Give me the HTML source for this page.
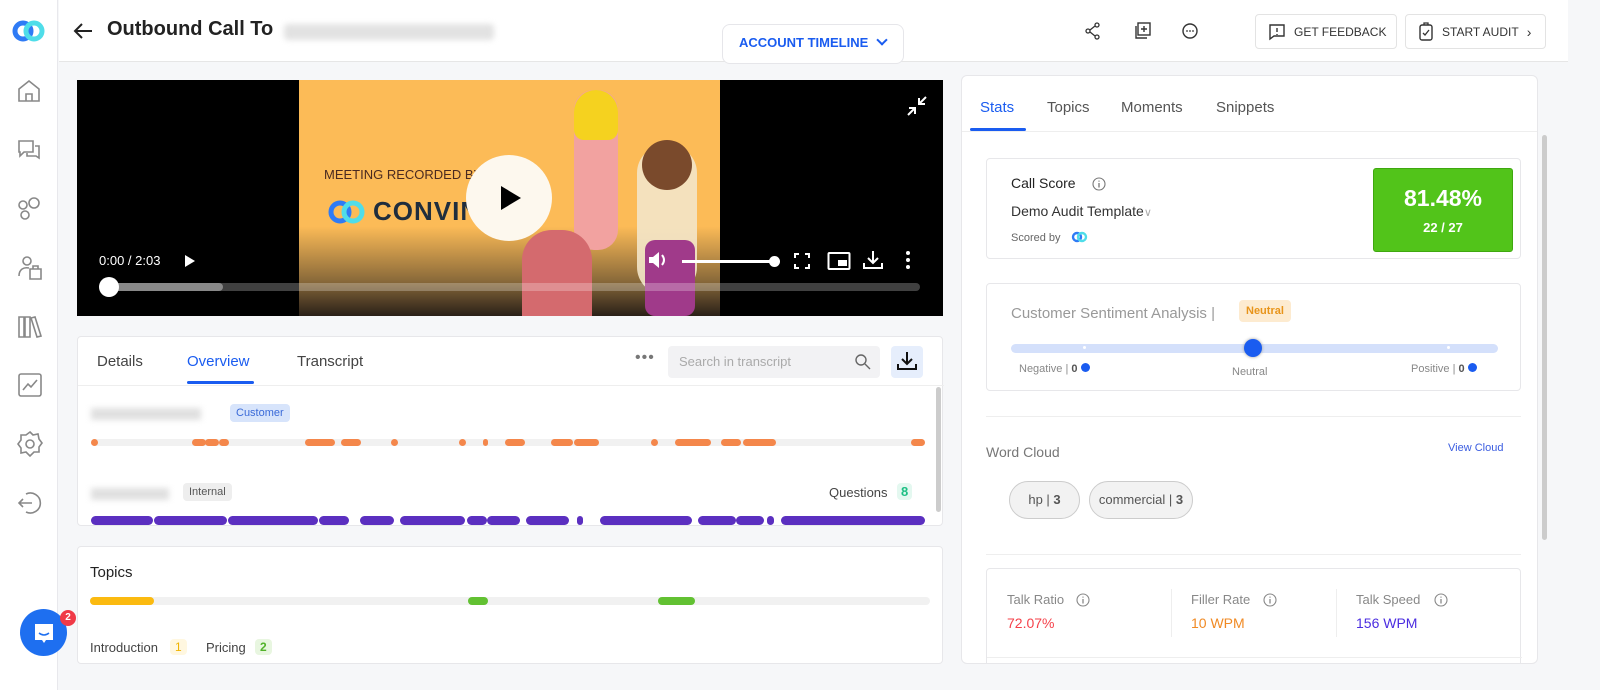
<!DOCTYPE html>
<html><head><meta charset="utf-8"><style>
*{box-sizing:border-box;margin:0;padding:0}
body{width:1600px;height:690px;overflow:hidden;background:#f6f7f9;font-family:"Liberation Sans",sans-serif;position:relative;color:#333}
.abs{position:absolute}
.side{left:0;top:0;width:58px;height:690px;background:#fff;border-right:1px solid #e8e8ec}
.hdr{left:59px;top:0;width:1509px;height:62px;background:#fff;border-bottom:1px solid #e6e6e6}
.btn{border:1px solid #e3e3e3;border-radius:4px;background:#fff;font-size:12px;color:#333;display:flex;align-items:center;gap:8px;padding-left:12px}
.card{background:#fff;border:1px solid #e7e7ea;border-radius:4px}
.pill{border-radius:4px;font-size:11px;padding:3px 6px}
.ic{stroke:#888;fill:none;stroke-width:1.6}
</style></head><body>
<div class="abs side">
 <svg class="abs" style="left:12px;top:20px" width="34" height="22"><circle cx="11" cy="11" r="8" stroke="#2f7bf5" stroke-width="5" fill="none"/><circle cx="22" cy="11" r="8" stroke="#4fdde9" stroke-width="5" fill="none"/></svg>
 <svg class="abs" style="left:16px;top:78px" width="26" height="26"><path class="ic" d="M3 11 L13 3 L23 11 V23 H3Z M10 23 V16 H16 V23"/></svg>
 <svg class="abs" style="left:16px;top:137px" width="26" height="26"><path class="ic" d="M3 4 H17 V15 H8 L4 19 V15 H3Z M19 9 H23 V21 L20 19 H11 V16"/></svg>
 <svg class="abs" style="left:15px;top:195px" width="28" height="28"><circle class="ic" cx="8" cy="10" r="4"/><circle class="ic" cx="19" cy="8" r="5"/><circle class="ic" cx="10" cy="20" r="4"/></svg>
 <svg class="abs" style="left:16px;top:254px" width="28" height="28"><circle class="ic" cx="11" cy="7" r="4"/><path class="ic" d="M3 22 C3 15 8 13 13 14 M14 15 H25 V25 H14Z M17 15 V12 H22 V15"/></svg>
 <svg class="abs" style="left:16px;top:313px" width="28" height="28"><path class="ic" d="M3 4 H8 V24 H3Z M9 4 H14 V24 H9Z M15 5 L19 4 L25 23 L21 24Z"/></svg>
 <svg class="abs" style="left:17px;top:372px" width="26" height="26"><rect class="ic" x="2" y="2" width="22" height="22" rx="2"/><path class="ic" d="M6 18 L11 12 L14 15 L20 8"/></svg>
 <svg class="abs" style="left:16px;top:430px" width="28" height="28"><circle class="ic" cx="14" cy="14" r="4"/><path class="ic" d="M14 2 L17 5 L22 4 L23 9 L26 13 L23 17 L23 22 L18 22 L14 26 L10 22 L5 23 L5 18 L2 14 L5 10 L5 5 L10 5Z"/></svg>
 <svg class="abs" style="left:16px;top:489px" width="28" height="28"><path class="ic" d="M10 5 A10 10 0 1 1 10 23 M16 14 H3 M7 10 L3 14 L7 18"/></svg>
</div>
<div class="abs" style="left:20px;top:609px;width:47px;height:47px;border-radius:50%;background:#1e6ff0"></div>
<svg class="abs" style="left:31px;top:620px" width="26" height="26"><path d="M4 4 H22 V20 H15 L13 23 L11 20 H4Z" fill="#fff"/><path d="M8 13 Q13 17 18 13" stroke="#1e6ff0" stroke-width="1.5" fill="none"/></svg>
<div class="abs" style="left:60px;top:610px;width:16px;height:16px;border-radius:50%;background:#f03a47;color:#fff;font-size:10px;font-weight:bold;text-align:center;line-height:16px">2</div>

<div class="abs hdr">
 <svg class="abs" style="left:13px;top:20px" width="22" height="22"><path d="M20 11 H3 M10 4 L3 11 L10 18" stroke="#222" stroke-width="2" fill="none"/></svg>
 <div class="abs" style="left:48px;top:18px;font-size:20px;font-weight:bold;color:#222">Outbound Call To</div>
 <div class="abs" style="left:225px;top:24px;width:210px;height:16px;background:#e2e2e2;filter:blur(3px);border-radius:4px"></div>
 <div class="abs" style="left:663px;top:24px;width:182px;height:40px;border:1px solid #e6e6ea;border-radius:8px;background:#fff;font-size:13px;font-weight:bold;color:#1a5cf0;padding:10px 0 0 16px">ACCOUNT TIMELINE <span style="display:inline-block;width:8px;height:8px;border-right:2px solid #1a5cf0;border-bottom:2px solid #1a5cf0;transform:rotate(45deg);margin:0 0 3px 6px"></span></div>
 <svg class="abs" style="left:1025px;top:22px" width="18" height="18"><circle cx="4" cy="9" r="2" stroke="#333" fill="none" stroke-width="1.3"/><circle cx="13" cy="3" r="2" stroke="#333" fill="none" stroke-width="1.3"/><circle cx="13" cy="15" r="2" stroke="#333" fill="none" stroke-width="1.3"/><path d="M6 8 L11 4 M6 10 L11 14" stroke="#333" stroke-width="1.3"/></svg>
 <svg class="abs" style="left:1074px;top:21px" width="20" height="20"><rect x="5" y="2" width="12" height="12" stroke="#333" fill="none" stroke-width="1.4"/><path d="M3 5 V17 H14 M11 5 V11 M8 8 H14" stroke="#333" fill="none" stroke-width="1.4"/></svg>
 <svg class="abs" style="left:1121px;top:21px" width="20" height="20"><circle cx="10" cy="10" r="7" stroke="#333" fill="none" stroke-width="1.4"/><circle cx="7" cy="10" r=".9" fill="#333"/><circle cx="10" cy="10" r=".9" fill="#333"/><circle cx="13" cy="10" r=".9" fill="#333"/></svg>
 <div class="abs btn" style="left:1196px;top:14px;width:142px;height:35px"><svg width="18" height="18"><path d="M2 2 H16 V13 H6 L2 16Z M9 5 V9 M9 11 V12" stroke="#333" fill="none" stroke-width="1.4"/></svg>GET FEEDBACK</div>
 <div class="abs btn" style="left:1346px;top:14px;width:141px;height:35px"><svg width="16" height="20"><rect x="2" y="3" width="12" height="15" rx="2" stroke="#333" fill="none" stroke-width="1.4"/><path d="M5 11 L7 13 L11 8 M6 3 V1 H10 V3" stroke="#333" fill="none" stroke-width="1.3"/></svg>START AUDIT <span style="font-size:14px">›</span></div>
</div>

<!-- video -->
<div class="abs" style="left:77px;top:80px;width:866px;height:236px;background:#000;overflow:hidden">
 <div class="abs" style="left:222px;top:0;width:421px;height:236px;background:linear-gradient(#fcbb57 0%,#fcbb57 62%,#8a6a3a 85%,#2a2018 100%)"></div>
 <div class="abs" style="left:247px;top:87px;font-size:13px;color:#4a2a20">MEETING RECORDED BY</div>
 <svg class="abs" style="left:250px;top:118px" width="40" height="28"><circle cx="13" cy="14" r="9" stroke="#2f7bf5" stroke-width="5" fill="none"/><circle cx="26" cy="14" r="9" stroke="#4fdde9" stroke-width="5" fill="none"/></svg>
 <div class="abs" style="left:296px;top:116px;font-size:26px;font-weight:bold;color:#1f2d3d;letter-spacing:1px">CONVIN</div>
 <div class="abs" style="left:497px;top:10px;width:44px;height:160px;background:#f2a2a0;border-radius:20px"></div>
 <div class="abs" style="left:497px;top:10px;width:44px;height:50px;background:#f5d21f;border-radius:22px 22px 10px 10px"></div>
 <div class="abs" style="left:560px;top:65px;width:60px;height:150px;background:#f3e6c9;border-radius:28px;opacity:.9"></div>
 <div class="abs" style="left:565px;top:60px;width:50px;height:50px;background:#7a4a2c;border-radius:50%"></div>
 <div class="abs" style="left:568px;top:160px;width:50px;height:76px;background:#a03a8a;border-radius:10px"></div>
 <div class="abs" style="left:445px;top:150px;width:70px;height:86px;background:#d46a6e;border-radius:30px 30px 0 0"></div>
 <div class="abs" style="left:389px;top:75px;width:86px;height:86px;border-radius:50%;background:#fdf8ee"></div>
 <svg class="abs" style="left:422px;top:105px" width="24" height="26"><path d="M2 1 L22 13 L2 25Z" fill="#000"/></svg>
 <svg class="abs" style="left:828px;top:14px" width="24" height="24"><path d="M3 21 L10 14 M4 14 H10 V20 M21 3 L14 10 M14 4 V10 H20" stroke="#fff" stroke-width="2" fill="none"/></svg>
 <div class="abs" style="left:22px;top:173px;font-size:13px;color:#fff">0:00 / 2:03</div>
 <svg class="abs" style="left:107px;top:174px" width="12" height="14"><path d="M1 1 L11 7 L1 13Z" fill="#fff"/></svg>
 <svg class="abs" style="left:570px;top:170px" width="22" height="20"><path d="M2 7 H6 L12 2 V18 L6 13 H2Z" fill="#fff"/><path d="M15 5 Q19 10 15 15" stroke="#fff" stroke-width="2" fill="none"/></svg>
 <div class="abs" style="left:605px;top:180px;width:92px;height:3px;background:#fff"></div>
 <div class="abs" style="left:692px;top:176px;width:11px;height:11px;border-radius:50%;background:#fff"></div>
 <svg class="abs" style="left:716px;top:172px" width="18" height="18"><path d="M2 6 V2 H6 M12 2 H16 V6 M16 12 V16 H12 M6 16 H2 V12" stroke="#fff" stroke-width="2" fill="none"/></svg>
 <svg class="abs" style="left:750px;top:171px" width="24" height="20"><rect x="1.5" y="2" width="21" height="16" rx="1" stroke="#fff" stroke-width="2" fill="none"/><rect x="11" y="9" width="9" height="6" fill="#fff"/></svg>
 <svg class="abs" style="left:785px;top:169px" width="22" height="22"><path d="M11 2 V14 M6 9 L11 14 L16 9 M2 14 V19 H20 V14" stroke="#fff" stroke-width="2" fill="none"/></svg>
 <svg class="abs" style="left:826px;top:170px" width="10" height="20"><circle cx="5" cy="3" r="2" fill="#fff"/><circle cx="5" cy="10" r="2" fill="#fff"/><circle cx="5" cy="17" r="2" fill="#fff"/></svg>
 <div class="abs" style="left:24px;top:203px;width:819px;height:8px;border-radius:4px;background:rgba(255,255,255,.25)"></div>
 <div class="abs" style="left:24px;top:203px;width:122px;height:8px;border-radius:4px;background:#888"></div>
 <div class="abs" style="left:22px;top:197px;width:20px;height:20px;border-radius:50%;background:#fff"></div>
</div>

<!-- overview card -->
<div class="abs card" style="left:77px;top:336px;width:866px;height:190px">
 <div class="abs" style="left:19px;top:16px;font-size:15px;color:#444">Details</div>
 <div class="abs" style="left:109px;top:16px;font-size:15px;color:#1a5cf0">Overview</div>
 <div class="abs" style="left:109px;top:44px;width:67px;height:3px;background:#1a5cf0;border-radius:2px"></div>
 <div class="abs" style="left:219px;top:16px;font-size:15px;color:#444">Transcript</div>
 <div class="abs" style="left:557px;top:12px;font-size:16px;color:#777;letter-spacing:1px">•••</div>
 <div class="abs" style="left:590px;top:9px;width:212px;height:32px;background:#f2f2f4;border-radius:4px;font-size:13px;color:#aaa;padding:8px 11px">Search in transcript</div>
 <svg class="abs" style="left:776px;top:16px" width="18" height="18"><circle cx="7" cy="7" r="5" stroke="#666" stroke-width="1.4" fill="none"/><path d="M11 11 L16 16" stroke="#666" stroke-width="1.4"/></svg>
 <div class="abs" style="left:813px;top:9px;width:32px;height:32px;background:#e6eefc;border-radius:4px"></div>
 <svg class="abs" style="left:818px;top:13px" width="22" height="22"><path d="M11 2 V14 M6 9 L11 14 L16 9 M2 14 V19 H20 V14" stroke="#111" stroke-width="2" fill="none"/></svg>
 <div class="abs" style="left:0;top:48px;width:866px;height:1px;background:#eee"></div>
 <div class="abs" style="left:13px;top:71px;width:110px;height:12px;background:#e0e0e0;filter:blur(3px)"></div>
 <div class="abs pill" style="left:152px;top:67px;background:#d7e4fb;color:#3a6ad8">Customer</div>
 <div class="abs" style="left:13px;top:102px;width:834px;height:7px;background:#f1f1f1;border-radius:4px"></div>
 <svg class="abs" style="left:13px;top:102px" width="834" height="7">
  <g fill="#f4874b"><rect x="0" width="7" height="7" rx="3.5"/><rect x="101" width="14" height="7" rx="3.5"/><rect x="114" width="14" height="7" rx="3.5"/><rect x="128" width="10" height="7" rx="3.5"/><rect x="214" width="30" height="7" rx="3.5"/><rect x="250" width="20" height="7" rx="3.5"/><rect x="300" width="7" height="7" rx="3.5"/><rect x="368" width="7" height="7" rx="3.5"/><rect x="392" width="5" height="7" rx="2.5"/><rect x="414" width="20" height="7" rx="3.5"/><rect x="460" width="22" height="7" rx="3.5"/><rect x="483" width="25" height="7" rx="3.5"/><rect x="560" width="7" height="7" rx="3.5"/><rect x="584" width="36" height="7" rx="3.5"/><rect x="630" width="20" height="7" rx="3.5"/><rect x="652" width="33" height="7" rx="3.5"/><rect x="820" width="14" height="7" rx="3.5"/></g></svg>
 <div class="abs" style="left:13px;top:151px;width:78px;height:12px;background:#e0e0e0;filter:blur(3px)"></div>
 <div class="abs pill" style="left:105px;top:146px;background:#eee;color:#555">Internal</div>
 <div class="abs" style="left:751px;top:148px;font-size:13px;color:#444">Questions</div>
 <div class="abs pill" style="left:819px;top:146px;background:#e4f8f0;color:#1dbf84;font-weight:bold;font-size:13px;padding:1px 4px">8</div>
 <svg class="abs" style="left:13px;top:179px" width="834" height="9">
  <g fill="#5b2fc0"><rect x="0" width="62" height="9" rx="4.5"/><rect x="63" width="73" height="9" rx="4.5"/><rect x="137" width="90" height="9" rx="4.5"/><rect x="228" width="30" height="9" rx="4.5"/><rect x="269" width="34" height="9" rx="4.5"/><rect x="309" width="65" height="9" rx="4.5"/><rect x="376" width="20" height="9" rx="4.5"/><rect x="396" width="33" height="9" rx="4.5"/><rect x="435" width="43" height="9" rx="4.5"/><rect x="486" width="6" height="9" rx="3"/><rect x="509" width="92" height="9" rx="4.5"/><rect x="607" width="38" height="9" rx="4.5"/><rect x="645" width="28" height="9" rx="4.5"/><rect x="676" width="7" height="9" rx="3.5"/><rect x="690" width="144" height="9" rx="4.5"/></g></svg>
 <div class="abs" style="left:858px;top:50px;width:5px;height:125px;background:#ccc;border-radius:3px"></div>
</div>

<!-- topics card -->
<div class="abs card" style="left:77px;top:546px;width:866px;height:118px">
 <div class="abs" style="left:12px;top:17px;font-size:15px;color:#222">Topics</div>
 <div class="abs" style="left:12px;top:50px;width:840px;height:8px;background:#f1f1f1;border-radius:4px"></div>
 <div class="abs" style="left:12px;top:50px;width:64px;height:8px;background:#fbba10;border-radius:4px"></div>
 <div class="abs" style="left:390px;top:50px;width:20px;height:8px;background:#62c132;border-radius:4px"></div>
 <div class="abs" style="left:580px;top:50px;width:37px;height:8px;background:#62c132;border-radius:4px"></div>
 <div class="abs" style="left:12px;top:93px;font-size:13px;color:#444">Introduction</div>
 <div class="abs pill" style="left:92px;top:92px;background:#fff7e0;color:#f0b400;font-size:12px;padding:1px 5px">1</div>
 <div class="abs" style="left:128px;top:93px;font-size:13px;color:#444">Pricing</div>
 <div class="abs pill" style="left:177px;top:92px;background:#e8f6e0;color:#52b22a;font-size:12px;padding:1px 5px;font-weight:bold">2</div>
</div>

<!-- right panel -->
<div class="abs card" style="left:961px;top:75px;width:577px;height:589px;border-radius:6px;overflow:hidden">
 <div class="abs" style="left:18px;top:23px;font-size:15px;color:#1a5cf0">Stats</div>
 <div class="abs" style="left:8px;top:52px;width:56px;height:3px;background:#1a5cf0;border-radius:2px"></div>
 <div class="abs" style="left:85px;top:23px;font-size:15px;color:#555">Topics</div>
 <div class="abs" style="left:159px;top:23px;font-size:15px;color:#555">Moments</div>
 <div class="abs" style="left:254px;top:23px;font-size:15px;color:#555">Snippets</div>
 <div class="abs" style="left:0;top:55px;width:577px;height:1px;background:#eee"></div>
 <div class="abs card" style="left:24px;top:82px;width:535px;height:101px">
  <div class="abs" style="left:24px;top:16px;font-size:14px;color:#222">Call Score</div>
  <svg class="abs" style="left:104px;top:17px" width="16" height="16"><circle cx="8" cy="8" r="6" stroke="#777" stroke-width="1.1" fill="none"/><path d="M8 7 V11.5 M8 4.6 V5.6" stroke="#777" stroke-width="1.3"/></svg>
  <div class="abs" style="left:24px;top:44px;font-size:14px;color:#333">Demo Audit Template<span style="color:#aaa;font-size:11px">∨</span></div>
  <div class="abs" style="left:24px;top:73px;font-size:11px;color:#666">Scored by</div>
  <svg class="abs" style="left:84px;top:72px" width="18" height="12"><circle cx="6" cy="6" r="4" stroke="#2f7bf5" stroke-width="2.4" fill="none"/><circle cx="11" cy="6" r="4" stroke="#4fdde9" stroke-width="2.4" fill="none"/></svg>
  <div class="abs" style="left:386px;top:9px;width:140px;height:84px;background:#52c41a;border:1px solid #3fa80f;border-radius:3px;color:#fff;text-align:center">
   <div style="font-size:23px;font-weight:bold;margin-top:16px">81.48%</div>
   <div style="font-size:13px;font-weight:bold;margin-top:8px">22 / 27</div>
  </div>
 </div>
 <div class="abs card" style="left:24px;top:207px;width:535px;height:108px">
  <div class="abs" style="left:24px;top:21px;font-size:15px;color:#999">Customer Sentiment Analysis |</div>
  <div class="abs pill" style="left:252px;top:16px;background:#fdebd0;color:#e8941a;font-weight:bold;padding:5px 7px">Neutral</div>
  <div class="abs" style="left:24px;top:60px;width:487px;height:9px;background:#d4e0fb;border-radius:5px"></div>
  <div class="abs" style="left:96px;top:62px;width:3px;height:3px;border-radius:50%;background:#fff"></div>
  <div class="abs" style="left:460px;top:62px;width:3px;height:3px;border-radius:50%;background:#fff"></div>
  <div class="abs" style="left:257px;top:55px;width:18px;height:18px;border-radius:50%;background:#1a5cf0;box-shadow:0 0 3px #999"></div>
  <div class="abs" style="left:32px;top:79px;font-size:11px;color:#888">Negative | <b style="color:#555">0</b> <span style="display:inline-block;width:9px;height:9px;border-radius:50%;background:#1a5cf0"></span></div>
  <div class="abs" style="left:245px;top:82px;font-size:11px;color:#888">Neutral</div>
  <div class="abs" style="left:424px;top:79px;font-size:11px;color:#888">Positive | <b style="color:#555">0</b> <span style="display:inline-block;width:9px;height:9px;border-radius:50%;background:#1a5cf0"></span></div>
 </div>
 <div class="abs" style="left:24px;top:340px;width:535px;height:1px;background:#eee"></div>
 <div class="abs" style="left:24px;top:368px;font-size:14px;color:#777">Word Cloud</div>
 <div class="abs" style="left:486px;top:366px;font-size:11px;color:#3a5ce0">View Cloud</div>
 <div class="abs" style="left:47px;top:405px;width:71px;height:38px;border:1px solid #ccc;border-radius:19px;background:#f2f2f2;font-size:13px;color:#555;text-align:center;line-height:36px">hp | <b>3</b></div>
 <div class="abs" style="left:127px;top:405px;width:104px;height:38px;border:1px solid #ccc;border-radius:19px;background:#f2f2f2;font-size:13px;color:#555;text-align:center;line-height:36px">commercial | <b>3</b></div>
 <div class="abs" style="left:24px;top:478px;width:535px;height:1px;background:#eee"></div>
 <div class="abs card" style="left:24px;top:492px;width:535px;height:110px">
  <div class="abs" style="left:20px;top:23px;font-size:13px;color:#888">Talk Ratio</div>
  <div class="abs" style="left:20px;top:46px;font-size:14px;color:#f5414a">72.07%</div>
  <div class="abs" style="left:184px;top:20px;width:1px;height:48px;background:#eee"></div>
  <div class="abs" style="left:204px;top:23px;font-size:13px;color:#888">Filler Rate</div>
  <div class="abs" style="left:204px;top:46px;font-size:14px;color:#f08a24">10 WPM</div>
  <div class="abs" style="left:349px;top:20px;width:1px;height:48px;background:#eee"></div>
  <div class="abs" style="left:369px;top:23px;font-size:13px;color:#888">Talk Speed</div>
  <div class="abs" style="left:369px;top:46px;font-size:14px;color:#4b2de0">156 WPM</div>
  <svg class="abs" style="left:88px;top:23px" width="16" height="16"><circle cx="8" cy="8" r="6" stroke="#888" stroke-width="1.1" fill="none"/><path d="M8 7 V11.5 M8 4.6 V5.6" stroke="#888" stroke-width="1.3"/></svg>
  <svg class="abs" style="left:275px;top:23px" width="16" height="16"><circle cx="8" cy="8" r="6" stroke="#888" stroke-width="1.1" fill="none"/><path d="M8 7 V11.5 M8 4.6 V5.6" stroke="#888" stroke-width="1.3"/></svg>
  <svg class="abs" style="left:446px;top:23px" width="16" height="16"><circle cx="8" cy="8" r="6" stroke="#888" stroke-width="1.1" fill="none"/><path d="M8 7 V11.5 M8 4.6 V5.6" stroke="#888" stroke-width="1.3"/></svg>
  <div class="abs" style="left:0;top:88px;width:535px;height:1px;background:#eee"></div>
 </div>
</div>
<div class="abs" style="left:1542px;top:135px;width:5px;height:405px;background:#ccc;border-radius:3px"></div>
</body></html>
